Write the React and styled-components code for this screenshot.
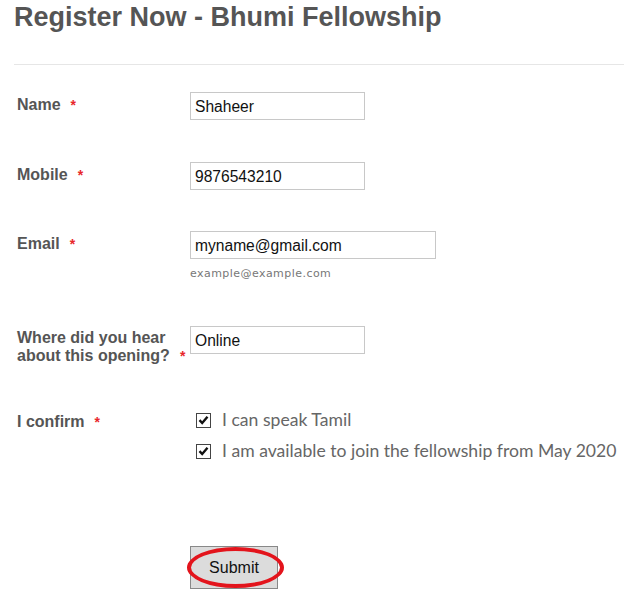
import React from "react";
import styled, { createGlobalStyle } from "styled-components";

const GlobalStyle = createGlobalStyle`
  body {
    margin: 0;
    background: #fff;
    font-family: "Liberation Sans", Arial, sans-serif;
  }
`;

const Page = styled.div`
  padding-left: 14px;
  width: 610px;
  overflow: hidden;
`;

const Header = styled.header`
  padding-top: 1px;
  height: 63px;
  border-bottom: 1px solid #e6e6e6;
  h1 {
    margin: 0;
    font-size: 27px;
    line-height: 32px;
    font-weight: bold;
    color: #555;
  }
`;

const Form = styled.form`
  padding-left: 3px;
  padding-top: 6px;
`;

const Row = styled.div`
  display: grid;
  grid-template-columns: 173px 1fr;
  padding: ${(p) => p.$pad || "21px 0"};
`;

const Label = styled.label`
  font-size: 16px;
  line-height: 18px;
  font-weight: bold;
  color: #555;
  padding-top: ${(p) => p.$top || "4px"};
`;

const Star = styled.span`
  color: #e8262b;
  font-size: 14px;
  margin-left: 10px;
`;

const Input = styled.input`
  box-sizing: border-box;
  width: ${(p) => p.$w || "175px"};
  height: 28px;
  border: 1px solid #c8c8c8;
  padding: 2px 4px 0;
  font-family: "Liberation Sans", Arial, sans-serif;
  font-size: 15.6px;
  color: #111;
  outline: none;
`;

const Hint = styled.div`
  margin-top: 8px;
  font-family: "DejaVu Sans", Verdana, sans-serif;
  font-size: 11px;
  letter-spacing: 0.45px;
  color: #777;
  line-height: 14px;
`;

const Checks = styled.div`
  display: flex;
  flex-direction: column;
  gap: 11px;
  padding-left: 6px;
`;

const CheckItem = styled.label`
  display: flex;
  align-items: center;
  gap: 11px;
  font-family: Lato, "Open Sans", sans-serif;
  font-size: 17.6px;
  line-height: 20px;
  color: #666;
`;

const Box = styled.span`
  box-sizing: border-box;
  width: 15px;
  height: 15px;
  border: 1px solid #444;
  background: #fff;
  display: inline-flex;
  align-items: center;
  justify-content: center;
  flex: none;
`;

const ButtonWrap = styled.div`
  position: relative;
  margin: 85px 0 0 173px;
  width: 88px;
`;

const SubmitButton = styled.button`
  width: 88px;
  height: 43px;
  border: 1px solid #888;
  background: #dcdcdc;
  font-family: "Liberation Sans", Arial, sans-serif;
  font-size: 16px;
  color: #111;
  padding: 0;
`;

const Circle = styled.span`
  position: absolute;
  left: -3px;
  top: 1px;
  width: 97px;
  height: 41px;
  box-sizing: border-box;
  border: 4px solid #e3141c;
  border-radius: 50%;
  pointer-events: none;
`;

const Check = () => (
  <Box>
    <svg width="11" height="10" viewBox="0 0 11 10">
      <path d="M1.5 5.2 L4.2 8 L9.5 1.8" fill="none" stroke="#111" strokeWidth="2.4" />
    </svg>
  </Box>
);

export default function App() {
  return (
    <>
      <GlobalStyle />
      <Page>
        <Header>
          <h1>Register Now - Bhumi Fellowship</h1>
        </Header>
        <Form onSubmit={(e) => e.preventDefault()}>
          <Row>
            <Label>
              Name<Star>*</Star>
            </Label>
            <div>
              <Input defaultValue="Shaheer" />
            </div>
          </Row>
          <Row>
            <Label>
              Mobile<Star>*</Star>
            </Label>
            <div>
              <Input defaultValue="9876543210" />
            </div>
          </Row>
          <Row $pad="20px 0 24px">
            <Label>
              Email<Star>*</Star>
            </Label>
            <div>
              <Input $w="246px" defaultValue="myname@gmail.com" />
              <Hint>example@example.com</Hint>
            </div>
          </Row>
          <Row>
            <Label $top="3px">
              Where did you hear about this opening?<Star>*</Star>
            </Label>
            <div>
              <Input defaultValue="Online" />
            </div>
          </Row>
          <Row $pad="24px 0 0">
            <Label $top="3px">
              I confirm<Star>*</Star>
            </Label>
            <Checks>
              <CheckItem>
                <Check />
                I can speak Tamil
              </CheckItem>
              <CheckItem>
                <Check />
                I am available to join the fellowship from May 2020
              </CheckItem>
            </Checks>
          </Row>
          <ButtonWrap>
            <SubmitButton type="submit">Submit</SubmitButton>
            <Circle />
          </ButtonWrap>
        </Form>
      </Page>
    </>
  );
}
